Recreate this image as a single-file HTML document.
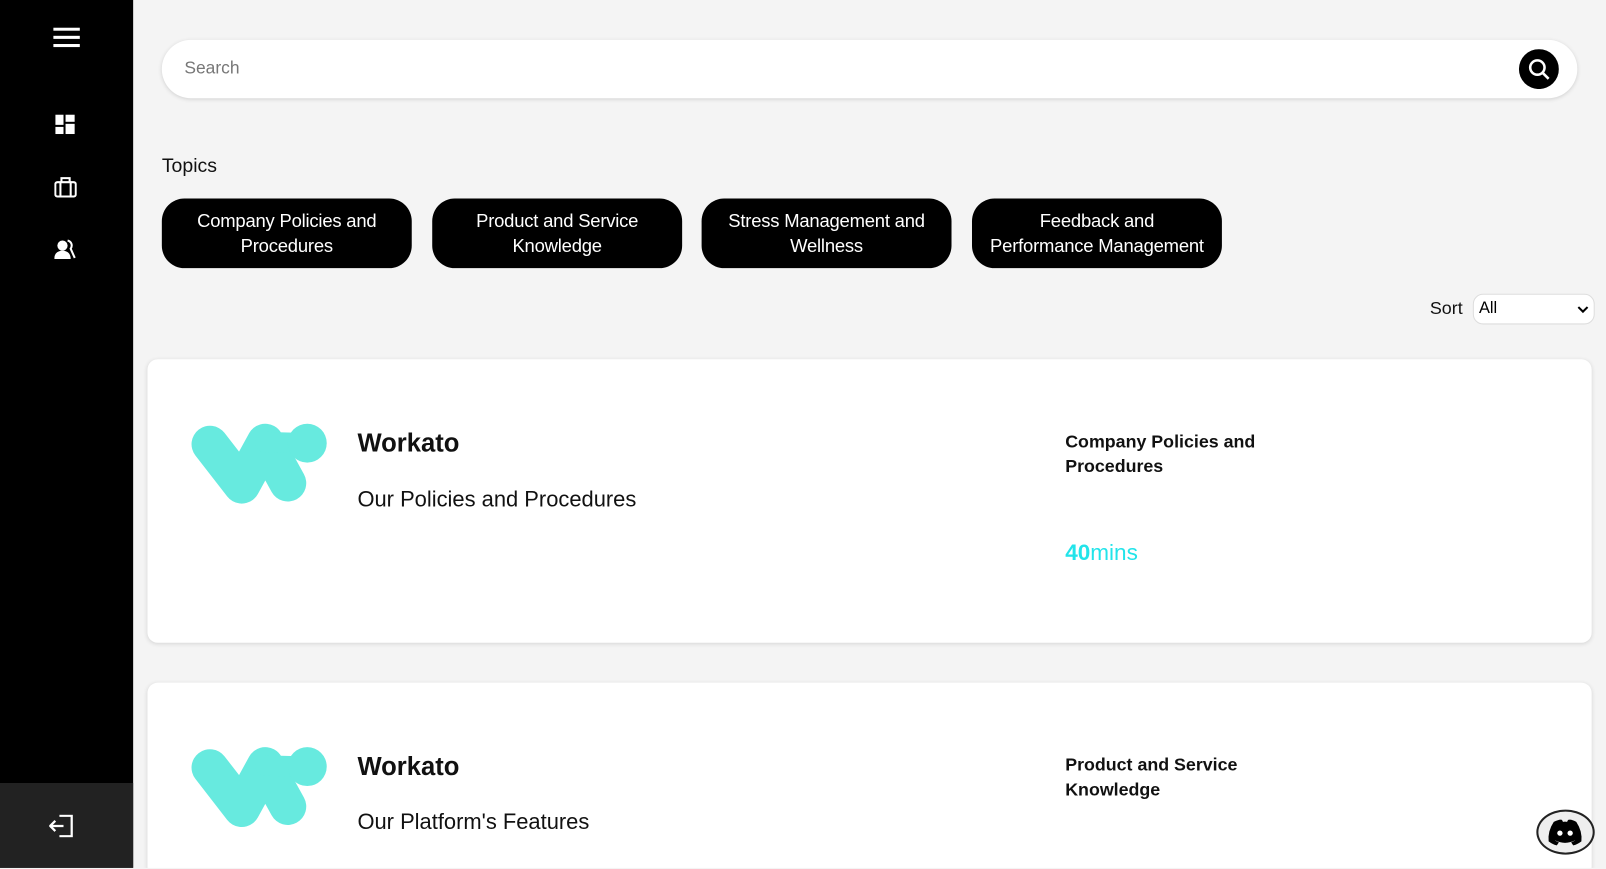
<!DOCTYPE html>
<html><head><meta charset="utf-8"><style>
*{margin:0;padding:0;box-sizing:border-box}
html,body{width:1606px;height:869px;overflow:hidden;background:#f4f4f4;font-family:"Liberation Sans",sans-serif}
#w{position:absolute;left:0;top:0;width:1568px;height:848px;overflow:hidden;transform:scale(1.02423,1.0235);transform-origin:0 0;background:#f4f4f4}
.abs{position:absolute}
.side{left:0;top:0;width:130px;height:848px;background:#000}
.bot{left:0;top:765px;width:130px;height:83px;background:#222}
.search{left:158px;top:39px;width:1382px;height:57px;background:#fff;border-radius:29px;box-shadow:0 1px 4px rgba(0,0,0,.15)}
.pill{top:194px;width:244px;height:68px;background:#000;color:#fff;border-radius:22px;font-size:18px;line-height:24px;text-align:center;display:flex;align-items:center;justify-content:center;letter-spacing:-0.2px}
.card{left:144px;width:1410px;height:277px;background:#fff;border-radius:10px;box-shadow:0 1px 4px rgba(0,0,0,.12)}
.t{font-size:25px;font-weight:bold;color:#111}
.s{font-size:21.4px;color:#111}
.r{font-size:17.4px;font-weight:bold;line-height:24px;color:#111}
</style></head><body><div id="w">
<div class="abs side"></div>
<div class="abs bot"></div>
<svg class="abs" style="left:52px;top:27px" width="26" height="20"><rect y="0" width="26" height="3" fill="#fff"/><rect y="8" width="26" height="3" fill="#fff"/><rect y="16" width="26" height="3" fill="#fff"/></svg>
<svg class="abs" style="left:54px;top:112px" width="19" height="19"><rect x="0" y="0" width="8" height="10" fill="#fff"/><rect x="10" y="0" width="9" height="7" fill="#fff"/><rect x="0" y="12" width="8" height="7" fill="#fff"/><rect x="10" y="9" width="9" height="10" fill="#fff"/></svg>
<svg class="abs" style="left:53px;top:172px" width="22" height="22" fill="none" stroke="#fff" stroke-width="2"><rect x="1" y="6" width="20" height="14" rx="2"/><path d="M7 6V2h8v4M6 6v14M16 6v14"/></svg>
<svg class="abs" style="left:53px;top:234px" width="22" height="20" fill="#fff"><circle cx="8" cy="6" r="5"/><path d="M0 19c0-6 4-8 8-8s8 2 8 8z"/><path d="M13 1c4 1 5 5 3 8l4 9" stroke="#fff" stroke-width="2" fill="none"/></svg>
<svg class="abs" style="left:48px;top:796px" width="24" height="22" fill="none" stroke="#fff" stroke-width="2.2"><path d="M10 1h12v20H10M1 11h13M6 6l-5 5 5 5"/></svg>

<div class="abs search"><div class="abs" style="left:22px;top:18px;font-size:17px;color:#777">Search</div>
<svg class="abs" style="left:1325px;top:9px" width="39" height="39"><circle cx="19.5" cy="19.5" r="19.5" fill="#000"/><circle cx="18" cy="18" r="7" stroke="#fff" stroke-width="2.5" fill="none"/><path d="M23 23l6 6" stroke="#fff" stroke-width="2.5"/></svg></div>

<div class="abs" style="left:158px;top:152px;font-size:19px;color:#111">Topics</div>
<div class="abs pill" style="left:158px">Company Policies and<br>Procedures</div>
<div class="abs pill" style="left:422px">Product and Service<br>Knowledge</div>
<div class="abs pill" style="left:685px">Stress Management and<br>Wellness</div>
<div class="abs pill" style="left:949px">Feedback and<br>Performance Management</div>

<div class="abs" style="left:1396px;top:291px;font-size:17.5px;color:#111">Sort</div>
<div class="abs" style="left:1438px;top:287px;width:119px;height:30px;background:#fff;border-radius:10px;border:1px solid #ddd;font-size:16px;padding:5px 5px;color:#000">All<svg class="abs" style="right:5px;top:11px" width="11" height="8"><path d="M1 1l4.5 4.5L10 1" stroke="#000" stroke-width="2" fill="none"/></svg></div>

<div class="abs card" style="top:351px"></div>
<div class="abs card" style="top:667px;height:200px"></div>

<svg class="abs" style="left:186px;top:413px" width="134" height="80"><g stroke="#67eadf" stroke-linecap="round" stroke-linejoin="round" fill="none"><path d="M19 21L50 61L73 19L95 59" stroke-width="36"/><path d="M73 19L112 20" stroke-width="20"/></g><circle cx="114" cy="20" r="19" fill="#67eadf"/></svg>
<svg class="abs" style="left:186px;top:729px" width="134" height="80"><g stroke="#67eadf" stroke-linecap="round" stroke-linejoin="round" fill="none"><path d="M19 21L50 61L73 19L95 59" stroke-width="36"/><path d="M73 19L112 20" stroke-width="20"/></g><circle cx="114" cy="20" r="19" fill="#67eadf"/></svg>

<div class="abs t" style="left:349px;top:419px">Workato</div>
<div class="abs s" style="left:349px;top:476px">Our Policies and Procedures</div>
<div class="abs r" style="left:1040px;top:419px">Company Policies and<br>Procedures</div>
<div class="abs" style="left:1040px;top:527px;font-size:22px;color:#22e4ea"><b>40</b>mins</div>

<div class="abs t" style="left:349px;top:735px">Workato</div>
<div class="abs s" style="left:349px;top:791px">Our Platform's Features</div>
<div class="abs r" style="left:1040px;top:735px">Product and Service<br>Knowledge</div>

<div class="abs" style="left:1500px;top:791px;width:57px;height:44px;border:2px solid #222;border-radius:50%;background:#eee"></div>
<svg class="abs" style="left:1510px;top:799px" width="36" height="28"><path d="M7 4Q13 1 15 2L16 4Q18 3.5 20 4L21 2Q24 1 29 4Q35 13 34 23Q30 26 26 27L24 24Q27 23 28 22Q18 27 8 22Q9 23 12 24L10 27Q6 26 2 23Q1 13 7 4Z" fill="#000"/><circle cx="13" cy="15" r="2.6" fill="#fff"/><circle cx="23" cy="15" r="2.6" fill="#fff"/></svg>
</div></body></html>
